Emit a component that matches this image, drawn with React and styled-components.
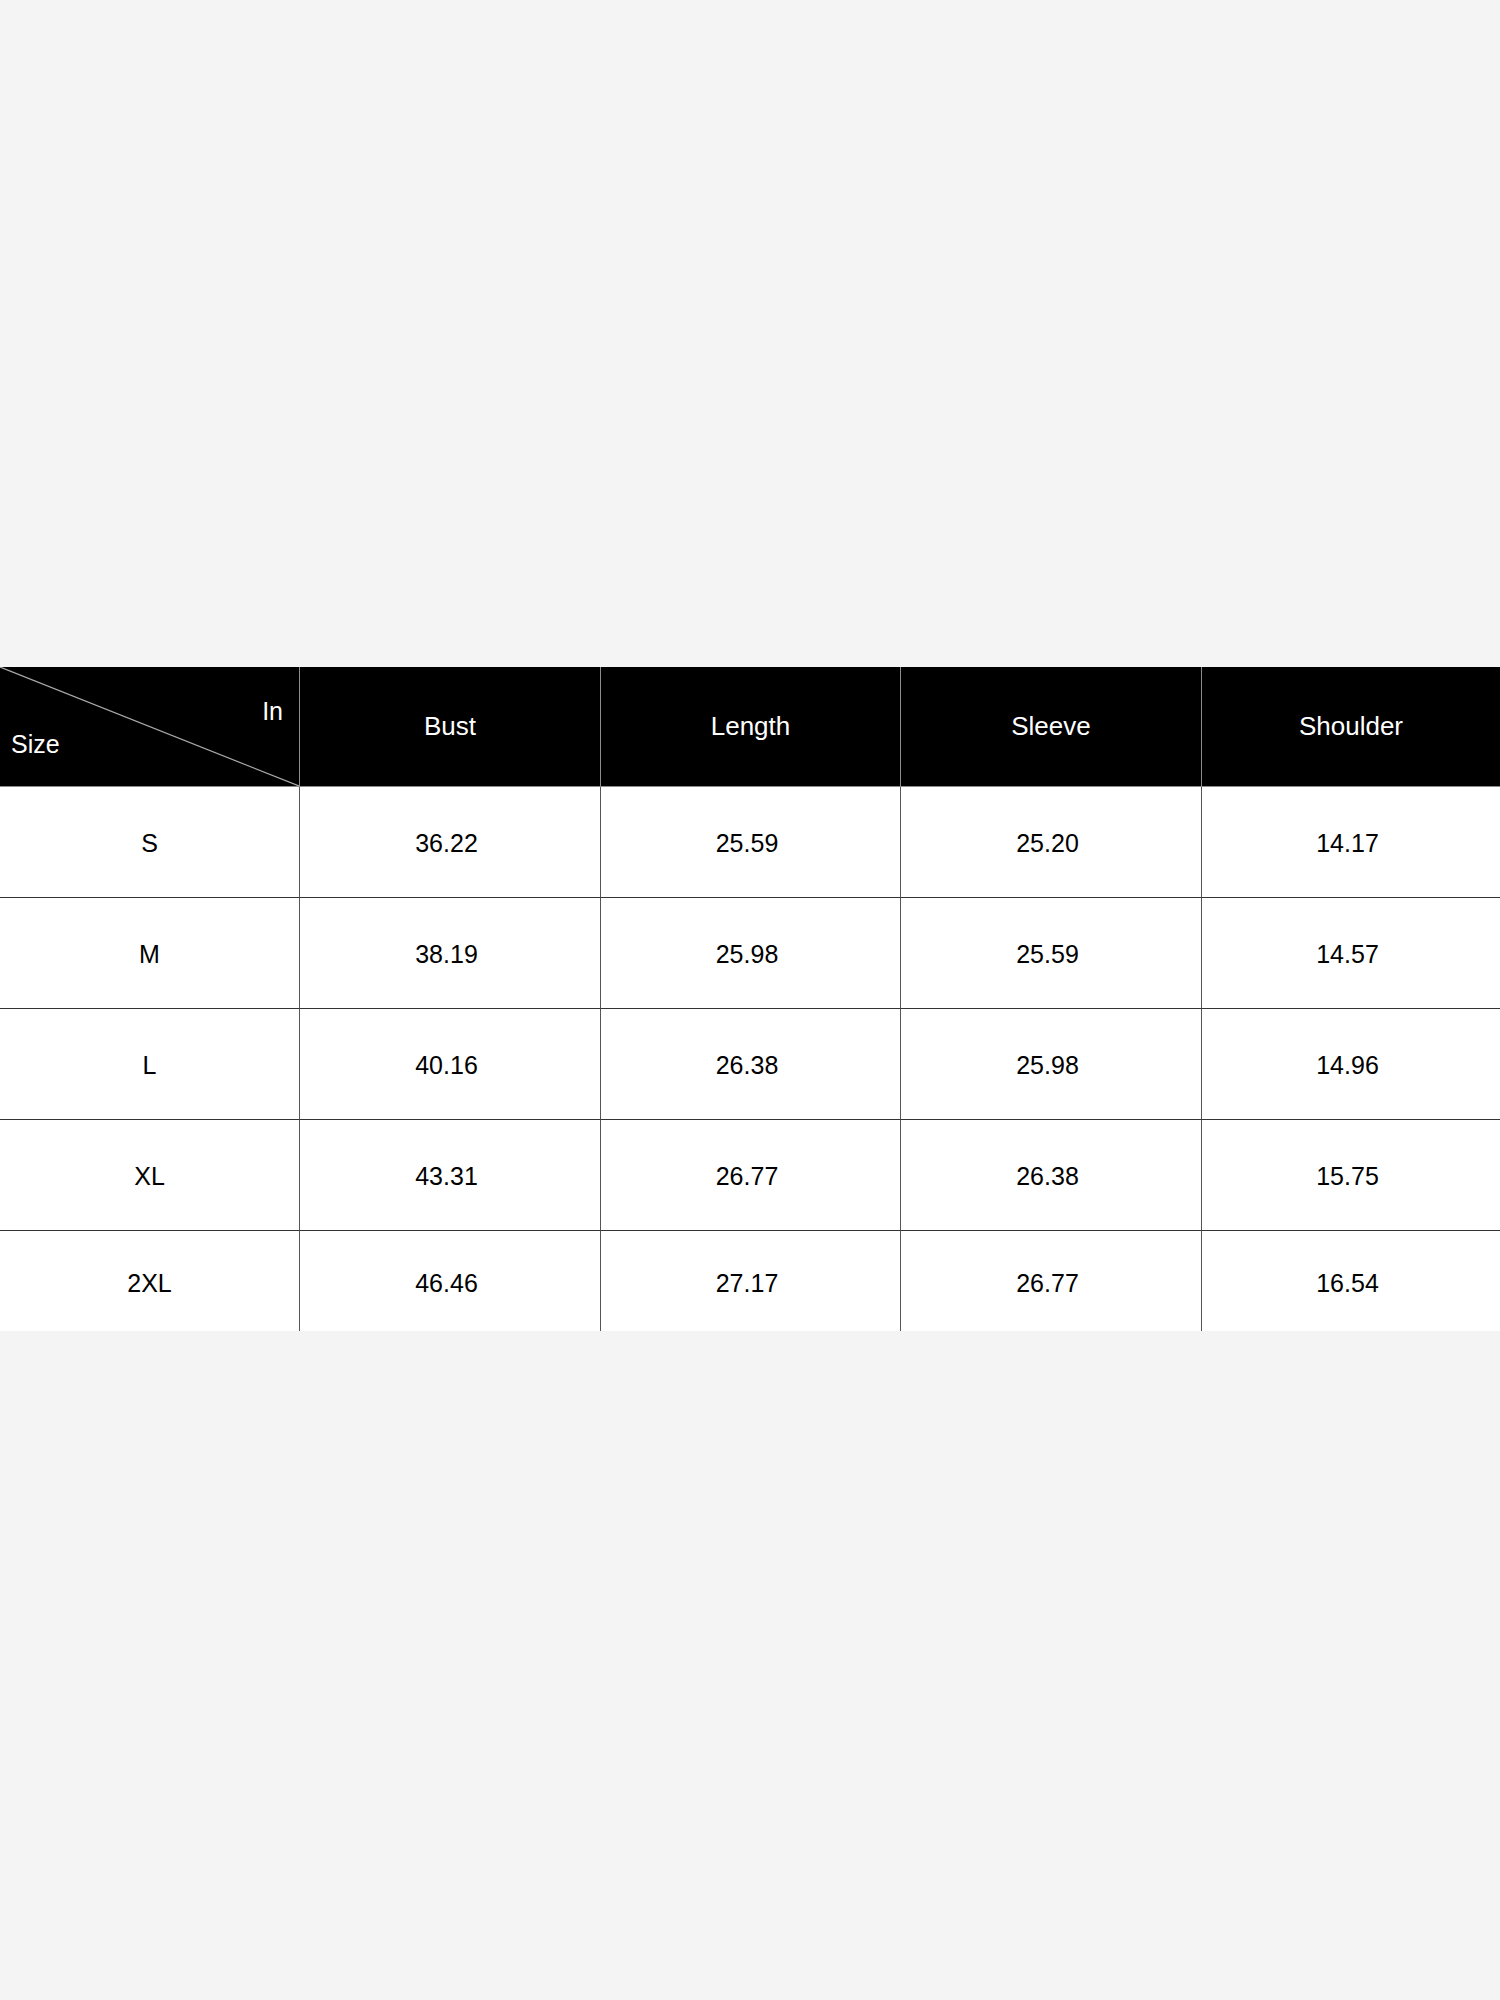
import React from "react";
import styled, { createGlobalStyle } from "styled-components";

const Global = createGlobalStyle`
  html, body { margin: 0; padding: 0; }
  body {
    background: #f4f4f4;
    font-family: "Liberation Sans", Arial, sans-serif;
  }
`;

const Page = styled.div`
  width: 1500px;
  min-height: 2000px;
  padding-top: 667px;
  box-sizing: border-box;
`;

const Table = styled.div`
  display: grid;
  grid-template-columns: 299px 301px 300px 301px 299px;
  background: #fff;
`;

const HeadCell = styled.div`
  position: relative;
  height: 119px;
  background: #000;
  color: #fff;
  font-size: 26px;
  display: flex;
  align-items: center;
  justify-content: center;
  border-bottom: 1px solid #8a8a8a;
  border-left: ${(p) => (p.$first ? "none" : "1px solid #8c8c8c")};
`;

const Corner = styled(HeadCell)`
  display: block;
`;

const Diagonal = styled.svg`
  position: absolute;
  inset: 0;
  width: 100%;
  height: 100%;
`;

const CornerLabel = styled.span`
  position: absolute;
  font-size: 25px;
  line-height: 1;
  color: #fff;
  ${(p) => (p.$top ? "right: 16px; top: 32px;" : "left: 11px; top: 65px;")}
`;

const Cell = styled.div`
  height: ${(p) => (p.$last ? "100px" : "111px")};
  box-sizing: border-box;
  padding-top: ${(p) => (p.$last ? "5px" : "3px")};
  padding-right: ${(p) => (p.$first ? "0" : "7px")};
  display: flex;
  align-items: center;
  justify-content: center;
  font-size: 25px;
  color: #000;
  border-bottom: ${(p) => (p.$last ? "none" : "1px solid #333")};
  border-left: ${(p) => (p.$first ? "none" : "1px solid #555")};
`;

const headers = ["Bust", "Length", "Sleeve", "Shoulder"];
const rows = [
  ["S", "36.22", "25.59", "25.20", "14.17"],
  ["M", "38.19", "25.98", "25.59", "14.57"],
  ["L", "40.16", "26.38", "25.98", "14.96"],
  ["XL", "43.31", "26.77", "26.38", "15.75"],
  ["2XL", "46.46", "27.17", "26.77", "16.54"],
];

export default function App() {
  return (
    <Page>
      <Global />
      <Table>
        <Corner $first>
          <Diagonal viewBox="0 0 299 119" preserveAspectRatio="none">
            <line x1="0" y1="0" x2="299" y2="119" stroke="#a8a8a8" strokeWidth="1.2" />
          </Diagonal>
          <CornerLabel $top>In</CornerLabel>
          <CornerLabel>Size</CornerLabel>
        </Corner>
        {headers.map((h) => (
          <HeadCell key={h}>{h}</HeadCell>
        ))}
        {rows.map((r, ri) =>
          r.map((v, ci) => (
            <Cell key={`${ri}-${ci}`} $first={ci === 0} $last={ri === rows.length - 1}>
              {v}
            </Cell>
          ))
        )}
      </Table>
    </Page>
  );
}
